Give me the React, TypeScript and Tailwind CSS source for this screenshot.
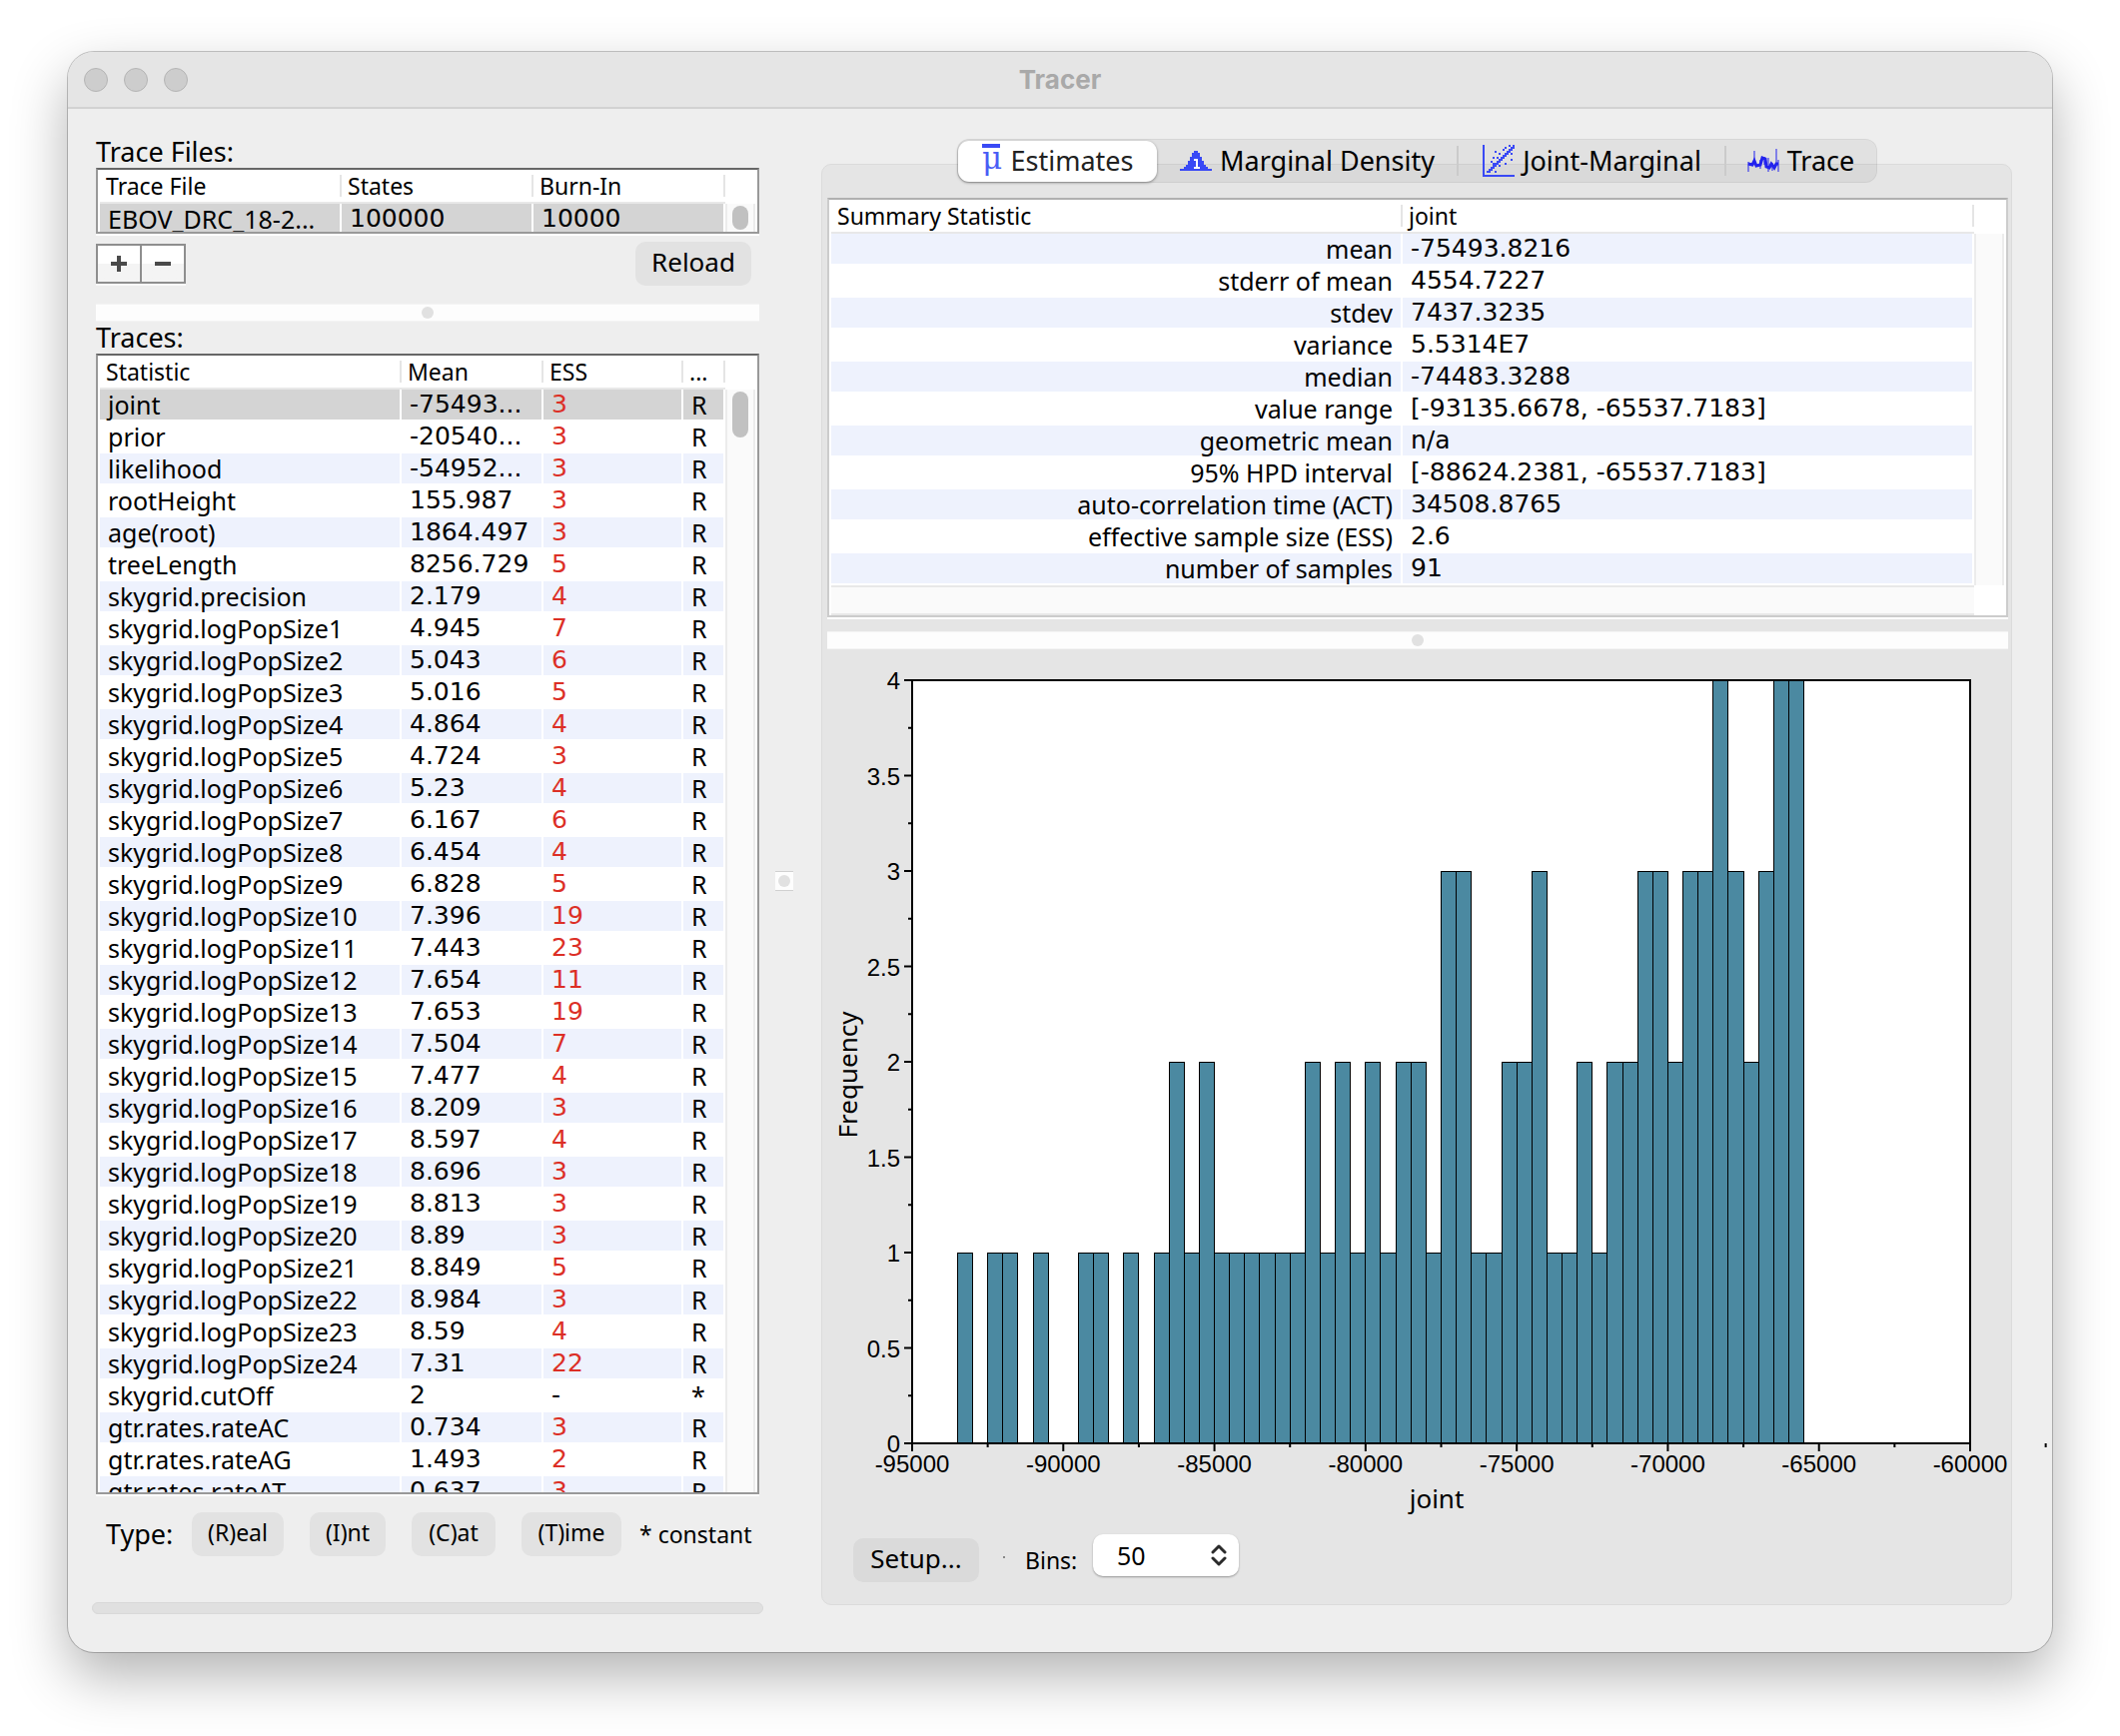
import type { ReactNode } from "react";
import { clsx } from "clsx";

type TraceRow = [name: string, mean: string, ess: string, type: string];

const traces: TraceRow[] = [
  ["joint", "-75493...", "3", "R"],
  ["prior", "-20540...", "3", "R"],
  ["likelihood", "-54952...", "3", "R"],
  ["rootHeight", "155.987", "3", "R"],
  ["age(root)", "1864.497", "3", "R"],
  ["treeLength", "8256.729", "5", "R"],
  ["skygrid.precision", "2.179", "4", "R"],
  ["skygrid.logPopSize1", "4.945", "7", "R"],
  ["skygrid.logPopSize2", "5.043", "6", "R"],
  ["skygrid.logPopSize3", "5.016", "5", "R"],
  ["skygrid.logPopSize4", "4.864", "4", "R"],
  ["skygrid.logPopSize5", "4.724", "3", "R"],
  ["skygrid.logPopSize6", "5.23", "4", "R"],
  ["skygrid.logPopSize7", "6.167", "6", "R"],
  ["skygrid.logPopSize8", "6.454", "4", "R"],
  ["skygrid.logPopSize9", "6.828", "5", "R"],
  ["skygrid.logPopSize10", "7.396", "19", "R"],
  ["skygrid.logPopSize11", "7.443", "23", "R"],
  ["skygrid.logPopSize12", "7.654", "11", "R"],
  ["skygrid.logPopSize13", "7.653", "19", "R"],
  ["skygrid.logPopSize14", "7.504", "7", "R"],
  ["skygrid.logPopSize15", "7.477", "4", "R"],
  ["skygrid.logPopSize16", "8.209", "3", "R"],
  ["skygrid.logPopSize17", "8.597", "4", "R"],
  ["skygrid.logPopSize18", "8.696", "3", "R"],
  ["skygrid.logPopSize19", "8.813", "3", "R"],
  ["skygrid.logPopSize20", "8.89", "3", "R"],
  ["skygrid.logPopSize21", "8.849", "5", "R"],
  ["skygrid.logPopSize22", "8.984", "3", "R"],
  ["skygrid.logPopSize23", "8.59", "4", "R"],
  ["skygrid.logPopSize24", "7.31", "22", "R"],
  ["skygrid.cutOff", "2", "-", "*"],
  ["gtr.rates.rateAC", "0.734", "3", "R"],
  ["gtr.rates.rateAG", "1.493", "2", "R"],
  ["gtr.rates.rateAT", "0.637", "3", "R"],
];

const summary = [
  ["mean", "-75493.8216"],
  ["stderr of mean", "4554.7227"],
  ["stdev", "7437.3235"],
  ["variance", "5.5314E7"],
  ["median", "-74483.3288"],
  ["value range", "[-93135.6678, -65537.7183]"],
  ["geometric mean", "n/a"],
  ["95% HPD interval", "[-88624.2381, -65537.7183]"],
  ["auto-correlation time (ACT)", "34508.8765"],
  ["effective sample size (ESS)", "2.6"],
  ["number of samples", "91"],
];

// one entry per 500-wide bin, starting at -93500
const bins = [
  1, 0, 1, 1, 0, 1, 0, 0, 1, 1, 0, 1, 0, 1, 2, 1, 2, 1, 1, 1, 1, 1, 1, 2, 1, 2, 1, 2, 1, 2, 2, 1, 3, 3, 1, 1, 2, 2, 3,
  1, 1, 2, 1, 2, 2, 3, 3, 2, 3, 3, 4, 3, 2, 3, 4, 4,
];

const numberFont = "font-['DejaVu_Sans',sans-serif]";

function Th({ children }: { children: ReactNode }) {
  return (
    <th scope="col" className="h-[34px] border-b-2 border-[#e8e8e8] p-0 text-left text-[23px] font-normal">
      <span className="flex h-[22px] items-center border-r-2 border-[#e5e5e5] pl-[6px] whitespace-nowrap">{children}</span>
    </th>
  );
}

function Td({ children, className, shade }: { children: ReactNode; className?: string; shade: string }) {
  return (
    <td className={clsx("h-8 border-r-2 border-b-2 border-white bg-clip-padding px-2 py-0 leading-[30px] whitespace-nowrap", shade, className)}>
      {children}
    </td>
  );
}

function VScroll({ thumb }: { thumb?: string }) {
  return (
    <div className="w-[30px] shrink-0 pt-[34px]">
      <div className="h-full border-r-2 border-l-2 border-[#ececec] bg-[#fafafa] pt-[2px]">
        {thumb ? <div className={clsx("mx-auto w-4 rounded-full bg-[#c1c1c1]", thumb)} /> : null}
      </div>
    </div>
  );
}

function SplitBar({ className }: { className?: string }) {
  return (
    <div className={clsx("flex h-[18px] items-center justify-center border-y border-[#f4f4f4] bg-[#fdfdfd]", className)}>
      <span className="size-3 rounded-full bg-[#e1e1e1]" />
    </div>
  );
}

function PushButton({ children, className }: { children: ReactNode; className: string }) {
  return (
    <button type="button" className={clsx("h-11 rounded-[10px] pb-1 text-center", className)}>
      {children}
    </button>
  );
}

function MeanIcon() {
  return (
    <svg width="22" height="34" viewBox="0 0 22 34" aria-hidden="true">
      <rect x="1" width="18" height="4" fill="#3949f5" />
      <text x="1" y="25" fontSize="31" fontFamily="DejaVu Serif" fill="#4a5cf5">
        μ
      </text>
    </svg>
  );
}

function DensityIcon() {
  return (
    <svg width="32" height="32" viewBox="0 0 32 32" shapeRendering="crispEdges" aria-hidden="true">
      <path
        d="M14 6h4v2h2v4h2v4h2v4h2v2h2v2h4v2H0v-2h4v-2h2v-2h2v-4h2v-4h2V8h2z"
        fill="#3949f5"
      />
      <path d="M14 14h4v8h2v2h-6v-2h2v-6h-2z" fill="#fff" />
    </svg>
  );
}

const scatter = [
  [6, 3], [5, 6], [4, 8], [7, 6], [8, 4], [10, 2], [11, 1], [13, 0], [12, 4],
  [14, 4], [14, 7], [11, 9], [8, 10], [6, 13], [5, 9], [15, 0],
];

function JointIcon() {
  return (
    <svg width="32" height="32" viewBox="0 0 32 32" shapeRendering="crispEdges" aria-hidden="true" fill="#3949f5">
      <rect width="2" height="32" />
      <rect y="30" width="32" height="2" />
      {Array.from({ length: 13 }, (_, i) => (
        <rect key={i} x={4 + i * 2} y={26 - i * 2} width="4" height="2" />
      ))}
      {scatter.map(([x, y]) => (
        <rect key={`${x}-${y}`} x={x * 2} y={y * 2} width="2" height="2" />
      ))}
    </svg>
  );
}

function TraceIcon() {
  return (
    <svg width="32" height="32" viewBox="0 0 32 32" aria-hidden="true" fill="none" stroke="#2222ee">
      <path d="M1 27V17M7 18V6M13 24V15M17 20V12M21 27V13M25 26V18M29 20V4M31 27V15" strokeWidth="2" opacity="0.5" />
      <path d="M1 19l4 1 2-4 2 5 4-1 2-7 3 1 1 8 3 1 2-4 3 4 2-4h2" strokeWidth="3" />
    </svg>
  );
}

const tabs = [
  { label: "Estimates", icon: <MeanIcon />, width: "w-[199px]", selected: true },
  { label: "Marginal Density", icon: <DensityIcon />, width: "w-[302px]" },
  { label: "Joint-Marginal", icon: <JointIcon />, width: "w-[268px]" },
  { label: "Trace", icon: <TraceIcon />, width: "w-[150px]" },
];

function TabBar() {
  return (
    <div
      role="tablist"
      className="z-10 mb-[-19px] flex h-[44px] items-center self-center rounded-xl border border-black/5 bg-black/5 text-[27px]"
    >
      {tabs.map((tab, i) => (
        <button
          key={tab.label}
          type="button"
          role="tab"
          aria-selected={Boolean(tab.selected)}
          className={clsx(
            "relative flex items-center justify-center gap-2 whitespace-nowrap",
            tab.width,
            tab.selected ? "h-[41px] rounded-[11px] bg-white text-[#222] shadow-[0_1px_3px_rgba(0,0,0,0.4)]" : "h-full",
          )}
        >
          {tab.icon}
          {tab.label}
          {i === 1 || i === 2 ? <span className="absolute right-0 h-[30px] w-[2px] bg-[#cbcbcb]" /> : null}
        </button>
      ))}
    </div>
  );
}

const plot = { left: 85, top: 31, width: 1059, height: 764 };
const xAt = (value: number) => plot.left + ((value + 95000) / 35000) * plot.width;
const yAt = (value: number) => plot.top + plot.height - (value / 4) * plot.height;

function Histogram() {
  const bottom = plot.top + plot.height;
  return (
    <svg viewBox="0 0 1182 878" className="block h-auto w-full overflow-visible" role="img" aria-label="Frequency histogram of joint">
      <rect x={plot.left} y={plot.top} width={plot.width} height={plot.height} fill="#fff" />
      <g fill="#4b89a1" stroke="#000" shapeRendering="crispEdges">
        {bins.map((count, i) => {
          if (!count) return null;
          const x = xAt(-93500 + i * 500);
          return <rect key={i} x={x} y={yAt(count)} width={xAt(-93000 + i * 500) - x} height={bottom - yAt(count)} />;
        })}
      </g>
      <rect x={plot.left} y={plot.top} width={plot.width} height={plot.height} fill="none" stroke="#000" strokeWidth="2" />
      <g stroke="#000" strokeWidth="2">
        {Array.from({ length: 17 }, (_, i) => (
          <line key={i} x1={plot.left - (i % 2 ? 4 : 8)} x2={plot.left} y1={yAt(i / 4)} y2={yAt(i / 4)} />
        ))}
        {Array.from({ length: 15 }, (_, i) => (
          <line key={i} x1={xAt(-95000 + i * 2500)} x2={xAt(-95000 + i * 2500)} y1={bottom} y2={bottom + (i % 2 ? 4 : 8)} />
        ))}
        <line x1={xAt(-57500)} x2={xAt(-57500)} y1={bottom} y2={bottom + 4} />
      </g>
      <g fontFamily="Liberation Sans, Arial, sans-serif" fontSize="24">
        {Array.from({ length: 9 }, (_, i) => (
          <text key={i} x={plot.left - 12} y={yAt(i / 2) + 9} textAnchor="end">
            {i / 2}
          </text>
        ))}
        {Array.from({ length: 8 }, (_, i) => (
          <text key={i} x={xAt(-95000 + i * 5000)} y={bottom + 29} textAnchor="middle">
            {-95000 + i * 5000}
          </text>
        ))}
      </g>
      <g fontSize="26" textAnchor="middle">
        <text x="610" y="860">
          joint
        </text>
        <text transform="translate(30 426) rotate(-90)">Frequency</text>
      </g>
    </svg>
  );
}

function TraceFiles() {
  return (
    <section>
      <h2 className="text-[27px] leading-8">Trace Files:</h2>
      <div className="flex h-[66px] overflow-hidden border-2 border-[#999] border-t-[#666] bg-white px-[2px] shadow-[0_2px_0_#fff]">
        <table className="h-fit w-full min-w-0 flex-1 table-fixed border-separate border-spacing-0">
          <colgroup>
            <col className="w-[242px]" />
            <col className="w-[192px]" />
            <col className="w-[192px]" />
          </colgroup>
          <thead>
            <tr>
              <Th>Trace File</Th>
              <Th>States</Th>
              <Th>Burn-In</Th>
            </tr>
          </thead>
          <tbody>
            <tr>
              <Td shade="bg-[#d4d4d4]">EBOV_DRC_18-2...</Td>
              <Td shade="bg-[#d4d4d4]" className={numberFont}>100000</Td>
              <Td shade="bg-[#d4d4d4]" className={numberFont}>10000</Td>
            </tr>
          </tbody>
        </table>
        <VScroll thumb="h-6" />
      </div>
      <div className="flex h-[52px] items-center justify-between pt-2 pr-2">
        <div className="flex h-10 border-2 border-[#8e8e8e] bg-linear-to-b from-white from-50% to-[#f4f4f4] to-50% shadow-[0_2px_0_#fafafa]">
          <button type="button" aria-label="Add trace file" className="flex w-11 items-center justify-center border-r-2 border-[#8e8e8e]">
            <svg width="16" height="16" viewBox="0 0 16 16" stroke="#4a4a4a" strokeWidth="4" aria-hidden="true">
              <path d="M0 8h16M8 0v16" />
            </svg>
          </button>
          <button type="button" aria-label="Remove trace file" className="flex w-[42px] items-center justify-center">
            <svg width="16" height="16" viewBox="0 0 16 16" stroke="#4a4a4a" strokeWidth="4" aria-hidden="true">
              <path d="M0 8h16" />
            </svg>
          </button>
        </div>
        <PushButton className="w-[116px] bg-[#e2e2e2] text-[26px]">Reload</PushButton>
      </div>
    </section>
  );
}

function Traces() {
  return (
    <section className="flex min-h-0 flex-1 flex-col">
      <h2 className="text-[27px] leading-8">Traces:</h2>
      <div className="flex min-h-0 flex-1 overflow-hidden border-2 border-[#999] border-t-[#666] bg-white px-[2px] shadow-[0_2px_0_#fff]">
        <table className="h-fit w-full min-w-0 flex-1 table-fixed border-separate border-spacing-0">
          <colgroup>
            <col className="w-[302px]" />
            <col className="w-[142px]" />
            <col className="w-[140px]" />
            <col className="w-[42px]" />
          </colgroup>
          <thead>
            <tr>
              <Th>Statistic</Th>
              <Th>Mean</Th>
              <Th>ESS</Th>
              <Th>...</Th>
            </tr>
          </thead>
          <tbody>
            {traces.map(([name, mean, ess, type], i) => {
              const shade = i === 0 ? "bg-[#d4d4d4]" : i % 2 ? "bg-white" : "bg-[#eef2fd]";
              return (
                <tr key={name}>
                  <Td shade={shade}>{name}</Td>
                  <Td shade={shade} className={numberFont}>{mean}</Td>
                  <Td shade={shade} className={clsx(numberFont, ess !== "-" && "text-[#dc2f26]")}>{ess}</Td>
                  <Td shade={shade}>{type}</Td>
                </tr>
              );
            })}
          </tbody>
        </table>
        <VScroll thumb="h-[46px]" />
      </div>
    </section>
  );
}

function SummaryTable() {
  return (
    <div className="border-2 border-[#ccc] border-t-[#b0b0b0] bg-white px-[2px] shadow-[0_2px_0_#fff]">
      <div className="flex">
        <table className="w-full min-w-0 flex-1 table-fixed border-separate border-spacing-0">
          <thead>
            <tr>
              <Th>Summary Statistic</Th>
              <Th>joint</Th>
            </tr>
          </thead>
          <tbody>
            {summary.map(([name, value], i) => {
              const shade = i % 2 ? "bg-white" : "bg-[#eef2fd]";
              return (
                <tr key={name}>
                  <Td shade={shade} className="text-right">{name}</Td>
                  <Td shade={shade} className={numberFont}>{value}</Td>
                </tr>
              );
            })}
          </tbody>
        </table>
        <VScroll />
      </div>
      <div className="mr-[30px] h-[30px] border-y-2 border-[#e8e8e8] bg-[#fafafa]" />
    </div>
  );
}

export default function App() {
  return (
    <div className="flex h-screen flex-col bg-white px-[68px] pt-[52px] pb-[84px] font-['Noto_Sans','Lucida_Grande',sans-serif] text-[25px] text-black">
      <main className="flex min-h-0 flex-1 flex-col rounded-[26px] bg-[#eee] shadow-[0_0_0_1px_rgba(0,0,0,0.22),0_24px_56px_rgba(0,0,0,0.3)]">
        <header className="grid h-[57px] shrink-0 grid-cols-3 items-center rounded-t-[26px] border-b-2 border-[#d2d2d2] bg-[#e5e5e5] px-4">
          <div className="flex gap-4">
            <span className="size-6 rounded-full border border-[#b5b5b5] bg-[#cdcdcd]" />
            <span className="size-6 rounded-full border border-[#b5b5b5] bg-[#cdcdcd]" />
            <span className="size-6 rounded-full border border-[#b5b5b5] bg-[#cdcdcd]" />
          </div>
          <h1 className="text-center font-['Inter',sans-serif] text-[26px] font-bold text-[#a9a9a9]">Tracer</h1>
        </header>

        <div className="flex min-h-0 flex-1 pr-10 pl-6">
          <div className="flex w-[672px] shrink-0 flex-col pt-[27px] pb-[38px]">
            <div className="flex min-h-0 flex-1 flex-col px-1">
              <TraceFiles />
              <SplitBar className="mt-[18px] shrink-0" />
              <Traces />
            </div>
            <div className="mt-[18px] flex items-center gap-[18px] pl-[14px] text-[23px]">
              <span className="w-[68px] text-[27px]">Type:</span>
              <div className="flex gap-[26px]">
                <PushButton className="w-[92px] bg-[#e2e2e2]">(R)eal</PushButton>
                <PushButton className="w-[76px] bg-[#e2e2e2]">(I)nt</PushButton>
                <PushButton className="w-[84px] bg-[#e2e2e2]">(C)at</PushButton>
                <PushButton className="w-[100px] bg-[#e2e2e2]">(T)ime</PushButton>
              </div>
              <span className="whitespace-nowrap">* constant</span>
            </div>
            <div role="progressbar" aria-label="Progress" className="mt-[46px] h-3 rounded-full border border-[#d8d8d8] bg-[#e0e0e0]" />
          </div>

          <div className="mx-3 flex h-5 w-[18px] shrink-0 items-center justify-center self-center border-y border-[#d0d0d0] bg-[#fdfdfd]">
            <span className="size-3 rounded-full bg-[#e1e1e1]" />
          </div>

          <div className="ml-4 flex min-w-0 flex-1 flex-col pt-[30px] pb-[47px]">
            <TabBar />
            <div className="flex-1 rounded-[10px] border border-[#dbdbdb] bg-[#e5e5e5] pt-[33px] pr-[3px] pl-[5px]">
              <SummaryTable />
              <SplitBar className="mt-[14px]" />
              <Histogram />
              <div className="mt-2 flex h-12 items-end pl-[26px]">
                <PushButton className="w-[126px] bg-[#dadada] text-[26px]">Setup...</PushButton>
                <span className="mr-5 mb-6 ml-6 size-[2px] bg-[#888]" />
                <label htmlFor="bins" className="w-16 text-[23px] leading-[44px]">
                  Bins:
                </label>
                <div className="relative ml-1 self-start">
                  <select
                    id="bins"
                    defaultValue="50"
                    className="h-[42px] w-[146px] appearance-none rounded-[10px] bg-white pr-8 pl-6 text-[25px] leading-[38px] shadow-[0_1px_2px_rgba(0,0,0,0.35)]"
                  >
                    <option>20</option>
                    <option>50</option>
                    <option>100</option>
                  </select>
                  <svg
                    className="pointer-events-none absolute top-[10px] right-3"
                    width="16"
                    height="22"
                    viewBox="0 0 16 22"
                    fill="none"
                    stroke="#2b2b2b"
                    strokeWidth="3"
                    strokeLinecap="round"
                    strokeLinejoin="round"
                    aria-hidden="true"
                  >
                    <path d="M2 8l6-6 6 6M2 14l6 6 6-6" />
                  </svg>
                </div>
              </div>
            </div>
          </div>
        </div>
      </main>
    </div>
  );
}
